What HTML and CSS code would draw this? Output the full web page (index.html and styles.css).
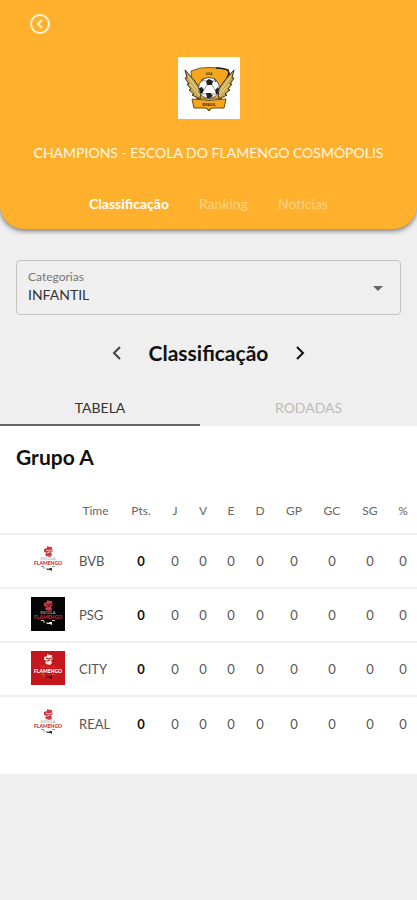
FILE: index.html
```
<!DOCTYPE html>
<html lang="pt-BR">
<head>
    <meta charset="UTF-8">
    <meta name="viewport" content="width=device-width, initial-scale=1.0">
    <title>Classificação</title>
    <link rel="stylesheet" href="styles.css">
</head>
<body>
    <!-- escudo da escola, reutilizado nas linhas da tabela -->
    <svg class="sprite" aria-hidden="true">
        <symbol id="crest" viewBox="0 0 34 34">
            <path class="crest-bird" d="M13 6l3-1 0-2 3 1 2 0 0 2 1 2-2 1 1 3-2 2-4-1-1-2 2-1-3-1z"/>
            <path class="crest-line" d="M15 7l3 1 3-1M16 10l3-1"/>
            <text class="crest-school" x="17" y="17">ESCOLA</text>
            <text class="crest-name" x="17" y="22">FLAMENGO</text>
            <path class="crest-base" d="M10 23.500h3M21 23.500h3M12 25h2"/>
            <path class="crest-foot" d="M15 25l2 1 2-1 2 0 0 3-2-1-1 0-2 0z"/>
        </symbol>
    </svg>

    <header class="header">
        <a href="#" class="back" aria-label="Voltar">
            <svg width="20" height="20" viewBox="0 0 20 20">
                <circle cx="10" cy="10" r="9"/>
                <path d="M12 6l-4 4 4 4"/>
            </svg>
        </a>
        <svg class="badge" viewBox="0 0 62 62" role="img" aria-label="Champions">
            <path d="M13 14Q22 10 31 10.500Q41 10 50 13L52 18 47 30 43 42H19L14 28z" fill="#f6a51f" stroke="#7d5c17"/>
            <path d="M38 11Q45 11 50 13L51 16 49 21" fill="none" stroke="#222" stroke-width="1.500"/>
            <path d="M7 13l9 10 7 10-1 9-8-4 2-1-5-4 2-1-4-5 2 0-4-6 2 0z" fill="#c8a850" stroke="#3a3013"/>
            <path d="M56 13l-9 10-7 10 1 9 8-4-2-1 5-4-2-1 4-5-2 0 4-6-2 0z" fill="#c8a850" stroke="#3a3013"/>
            <path d="M10 19l12 17M12 27l10 12M53 19L41 36M51 27L41 39" fill="none" stroke="#f0dc98"/>
            <text x="31" y="18" font-size="3">LIGA</text>
            <circle cx="31" cy="31" r="10.500" fill="#fff" stroke="#555"/>
            <path d="M28 24l3-2 4 2-1 4h-5zM21 31l3-1 2 3-2 4-2-1zM37 33l3-3 1 2-1 5-2 0zM28 36l5 0 2 3-3 2h-3zM23 23l3-2-2 4zM36 21l3 3-2 1z" fill="#222"/>
            <path d="M29 28l-3 5M34 28l3 5M24 37l4 0M33 37l5 0M28 24l-4-1M35 24l3-1" fill="none" stroke="#999"/>
            <path d="M14 42q17 3 34 0l-2 9H34l-3 2-3-2H16z" fill="#f6a51f" stroke="#6b4b0a"/>
            <path d="M29 52l2 2 2-2" fill="none" stroke="#7c5406"/>
            <text x="31" y="49" font-size="4">BRASIL</text>
        </svg>
        <p class="event">CHAMPIONS - ESCOLA DO FLAMENGO COSMÓPOLIS</p>
        <nav class="nav">
            <a href="#" class="nav-link active">Classificação</a>
            <a href="#" class="nav-link">Ranking</a>
            <a href="#" class="nav-link">Notícias</a>
        </nav>
    </header>

    <main>
        <div class="field">
            <label for="category">Categorias</label>
            <select id="category">
                <option>INFANTIL</option>
            </select>
            <svg class="field-arrow" width="10" height="5" viewBox="0 0 10 5"><path d="M0 0h10L5 5z"/></svg>
        </div>

        <div class="phase">
            <button type="button" class="phase-button" aria-label="Anterior">
                <svg width="10" height="14" viewBox="0 0 10 14"><path d="M8 1L2 7l6 6"/></svg>
            </button>
            <h1>Classificação</h1>
            <button type="button" class="phase-button next" aria-label="Próxima">
                <svg width="10" height="14" viewBox="0 0 10 14"><path d="M2 1l6 6-6 6"/></svg>
            </button>
        </div>

        <div class="tabs">
            <button type="button" class="tab active">TABELA</button>
            <button type="button" class="tab">RODADAS</button>
        </div>

        <section class="group">
            <h2>Grupo A</h2>
            <table class="standings">
                <colgroup>
                    <col class="col-logo">
                    <col>
                    <col class="col-points">
                    <col class="col-narrow" span="3">
                    <col class="col-small">
                    <col class="col-wide" span="3">
                    <col class="col-narrow">
                </colgroup>
                <thead>
                    <tr><th></th><th>Time</th><th>Pts.</th><th>J</th><th>V</th><th>E</th><th>D</th><th>GP</th><th>GC</th><th>SG</th><th>%</th></tr>
                </thead>
                <tbody>
                    <tr>
                        <td class="logo"><svg class="crest"><use href="#crest"/></svg></td>
                        <td class="team">BVB</td><td class="points">0</td><td>0</td><td>0</td><td>0</td><td>0</td><td>0</td><td>0</td><td>0</td><td>0</td>
                    </tr>
                    <tr>
                        <td class="logo"><svg class="crest black"><use href="#crest"/></svg></td>
                        <td class="team">PSG</td><td class="points">0</td><td>0</td><td>0</td><td>0</td><td>0</td><td>0</td><td>0</td><td>0</td><td>0</td>
                    </tr>
                    <tr>
                        <td class="logo"><svg class="crest red"><use href="#crest"/></svg></td>
                        <td class="team">CITY</td><td class="points">0</td><td>0</td><td>0</td><td>0</td><td>0</td><td>0</td><td>0</td><td>0</td><td>0</td>
                    </tr>
                    <tr>
                        <td class="logo"><svg class="crest"><use href="#crest"/></svg></td>
                        <td class="team">REAL</td><td class="points">0</td><td>0</td><td>0</td><td>0</td><td>0</td><td>0</td><td>0</td><td>0</td><td>0</td>
                    </tr>
                </tbody>
            </table>
        </section>
    </main>
</body>
</html>
```
FILE: styles.css
```
* {
    box-sizing: border-box;
}
body {
    margin: 0;
    font-family: Lato, sans-serif;
    font-size: 14px;
    color: #111;
    background: #efefef;
}
button {
    font-family: inherit;
    background: none;
    border: none;
    padding: 0;
    cursor: pointer;
}
.sprite {
    display: none;
}

.header {
    display: flex;
    flex-direction: column;
    align-items: center;
    padding: 14px 16px 15px;
    background: #ffb12d;
    border-radius: 0 0 24px 24px;
    box-shadow: 0 2px 5px rgba(0, 0, 0, 0.5);
}
.back {
    align-self: flex-start;
    height: 20px;
    margin-left: 14px;
}
.back svg {
    display: block;
    fill: none;
    stroke: #fff3d6;
    stroke-width: 2;
}
.badge {
    width: 62px;
    height: 62px;
    margin-top: 23px;
    background: white;
}
.badge text {
    font-weight: bold;
    text-anchor: middle;
    fill: #3b2a05;
}
.event {
    margin: 24px 0 0;
    line-height: 20px;
    color: #fff8e6;
    text-align: center;
}
.nav {
    display: flex;
    gap: 30px;
    margin-top: 31px;
}
.nav-link {
    line-height: 20px;
    color: #ffd180;
    text-decoration: none;
}
.nav-link.active {
    color: white;
    font-weight: bold;
}

.field {
    position: relative;
    margin: 31px 16px 0;
    border: 1px solid #c4c4c4;
    border-radius: 4px;
}
.field label {
    display: block;
    padding: 8px 11px 0;
    font-size: 12px;
    line-height: 16px;
    color: #777;
    pointer-events: none;
}
.field select {
    display: block;
    appearance: none;
    width: 100%;
    padding: 0 11px 9px;
    font-family: inherit;
    font-size: 14px;
    line-height: 20px;
    color: #333;
    background: none;
    border: none;
}
.field-arrow {
    position: absolute;
    right: 17px;
    top: 25px;
    fill: #666;
    pointer-events: none;
}

.phase {
    display: flex;
    justify-content: center;
    align-items: center;
    gap: 16px;
    margin-top: 24px;
}
.phase h1 {
    margin: 0;
    font-size: 21px;
    line-height: 28px;
}
.phase-button {
    display: flex;
    justify-content: center;
    width: 32px;
}
.phase-button svg {
    fill: none;
    stroke: #444;
    stroke-width: 2;
}
.phase-button.next svg {
    stroke: #111;
}

.tabs {
    display: grid;
    grid-template-columns: 48% 52%;
    margin-top: 24px;
}
.tab {
    height: 35px;
    font-size: 14px;
    color: #bbb;
    border-bottom: 2px solid transparent;
}
.tab.active {
    color: #333;
    border-color: #666;
}

.group {
    padding: 17px 0 24px;
    background: white;
}
.group h2 {
    margin: 0 16px;
    font-size: 21px;
    line-height: 28px;
}
.standings {
    width: 100%;
    margin-top: 17px;
    table-layout: fixed;
    border-collapse: collapse;
    text-align: center;
}
.col-logo {
    width: 70px;
}
.col-points {
    width: 40px;
}
.col-narrow {
    width: 28px;
}
.col-small {
    width: 30px;
}
.col-wide {
    width: 38px;
}
.standings th {
    height: 46px;
    padding: 0;
    font-size: 12px;
    font-weight: normal;
    color: #666;
}
.standings td {
    height: 54px;
    padding: 0;
    font-size: 13px;
    color: #555;
    border-top: 2px solid #f0f0f0;
}
.standings .team {
    padding-left: 9px;
    text-align: left;
}
.standings .points {
    font-weight: bold;
    color: #111;
}
.standings .logo {
    padding: 0 0 2px 31px;
}

.crest {
    --bird: #cf3b44;
    --line: #f3c5c8;
    --school: #999;
    --name: #cc2d35;
    --foot: #333;
    display: block;
    width: 34px;
    height: 34px;
}
.crest.black {
    --line: #5a0d14;
    --school: #ccc;
    --foot: #eee;
    background: #050505;
}
.crest.red {
    --bird: #f5dede;
    --line: #c4161c;
    --school: #d44;
    --name: white;
    --foot: #300;
    background: #c4161c;
}
.crest-bird {
    fill: var(--bird);
}
.crest-line {
    fill: none;
    stroke: var(--line);
}
.crest-school {
    fill: var(--school);
    font-size: 4px;
    text-anchor: middle;
}
.crest-name {
    fill: var(--name);
    font-size: 5px;
    font-weight: 900;
    text-anchor: middle;
}
.crest-base {
    stroke: var(--school);
}
.crest-foot {
    fill: var(--foot);
}
```
